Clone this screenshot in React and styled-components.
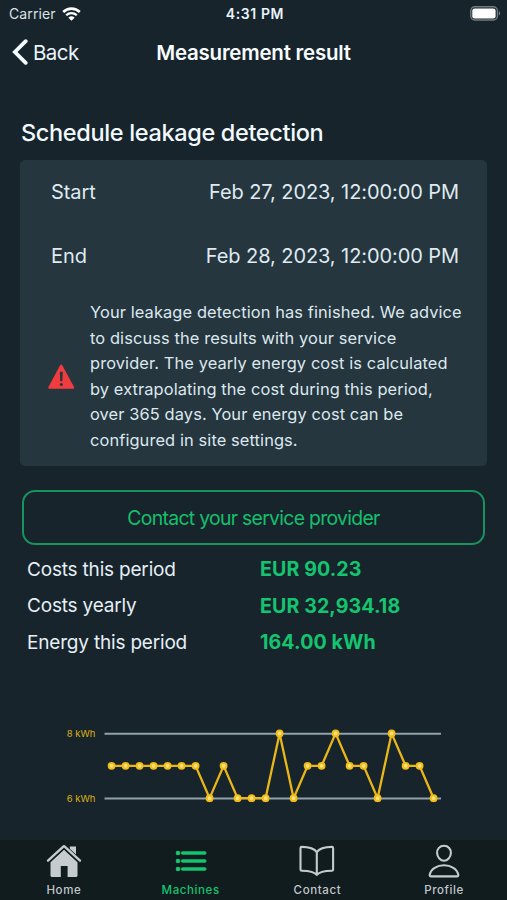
import styled, { createGlobalStyle } from "styled-components";

const GlobalStyle = createGlobalStyle`
  * {
    box-sizing: border-box;
  }
  body {
    margin: 0;
    background-color: #17242c;
    font-family: Inter, "Liberation Sans", sans-serif;
  }
`;

const Screen = styled.div`
  display: flex;
  flex-direction: column;
  width: 507px;
  height: 900px;
  overflow: hidden;
  background-color: #17242c;
  color: #e9f3f9;
`;

const StatusBar = styled.div`
  display: grid;
  grid-template-columns: 1fr auto 1fr;
  align-items: center;
  height: 27px;
  padding: 0 6px 0 9px;
`;

const Carrier = styled.div`
  display: flex;
  align-items: center;
  gap: 6px;
  font-size: 14px;
  letter-spacing: 0.1px;
  color: #dbe1e4;
`;

const Clock = styled.div`
  font-size: 14px;
  font-weight: 600;
  letter-spacing: 0.6px;
`;

const Battery = styled.div`
  display: flex;
  justify-content: flex-end;
`;

const NavBar = styled.header`
  display: grid;
  grid-template-columns: 1fr auto 1fr;
  align-items: center;
  height: 50px;
  padding: 0 12px;
`;

const BackButton = styled.div`
  display: flex;
  align-items: center;
  gap: 5px;
  font-size: 20.5px;
  letter-spacing: -0.55px;
`;

const NavTitle = styled.h1`
  margin: 0;
  font-size: 20.5px;
  font-weight: 600;
  letter-spacing: -0.23px;
  color: #f7fcff;
`;

const Content = styled.main`
  flex: 1;
  padding: 38px 20px 0;
`;

const SectionTitle = styled.h2`
  margin: 0 0 9px 1px;
  font-size: 23.5px;
  font-weight: 450;
  line-height: 36px;
  letter-spacing: -0.35px;
  color: #f2fafe;
`;

const Card = styled.section`
  width: 467px;
  height: 306px;
  border-radius: 5px;
  background-color: #26363f;
`;

const CardRow = styled.div`
  display: flex;
  align-items: center;
  justify-content: space-between;
  height: 64px;
  padding: 0 28px 0 31px;
  font-size: 20px;
  letter-spacing: -0.08px;
  color: #dfeaf1;
`;

const Notice = styled.div`
  display: flex;
  align-items: center;
  gap: 15px;
  padding: 12px 0 0 28px;
`;

const NoticeText = styled.p`
  margin: 0;
  font-size: 16.4px;
  line-height: 25.6px;
  letter-spacing: 0.11px;
  white-space: nowrap;
  color: #dce8ee;
`;

const ContactButton = styled.div`
  display: flex;
  align-items: center;
  justify-content: center;
  width: 463px;
  height: 55px;
  margin: 24px 0 6px 2px;
  border: 2px solid #19935d;
  border-radius: 13px;
  font-size: 19.4px;
  letter-spacing: -0.7px;
  color: #14c06d;
`;

const ResultRow = styled.div`
  display: grid;
  grid-template-columns: 233px 1fr;
  align-items: center;
  height: 36.6px;
  padding-left: 7px;
  font-size: 19px;
`;

const ResultLabel = styled.span`
  letter-spacing: -0.19px;
  color: #e6eff5;
`;

const ResultValue = styled.span`
  font-size: 19.6px;
  font-weight: 650;
  letter-spacing: 0.1px;
  color: #14c46f;
`;

const Chart = styled.svg`
  display: block;
  margin: 59px 0 0 40px;
`;

const TabBar = styled.nav`
  display: grid;
  grid-template-columns: repeat(4, 1fr);
  height: 60px;
  background-color: #111c1f;
`;

const Tab = styled.div`
  display: flex;
  flex-direction: column;
  align-items: center;
  padding: 2px 0 0 1px;
  font-size: 11.5px;
  font-weight: 500;
  letter-spacing: 0.6px;
  color: ${(props) => (props.$active ? "#14c46f" : "#c1c8cb")};
`;

const TabLabel = styled.span`
  line-height: 14px;
  margin-top: 3px;
`;

function WifiIcon() {
  return (
    <svg width="19" height="14" viewBox="0 0 19 14" fill="none">
      <path d="M1.2 5A11.8 11.8 0 0 1 17.8 5" stroke="#fff" strokeWidth="2.6" />
      <path d="M4.2 8.2A7.6 7.6 0 0 1 14.8 8.2" stroke="#fff" strokeWidth="2.3" />
      <path d="M9.5 13.8 6.4 10.8A4.5 4.5 0 0 1 12.6 10.8Z" fill="#fff" />
    </svg>
  );
}

function BatteryIcon() {
  return (
    <svg width="31" height="15" viewBox="0 0 31 15">
      <rect x="0.8" y="0.8" width="26.6" height="13.2" rx="4" fill="none" stroke="#707a80" strokeWidth="1.4" />
      <rect x="2.3" y="2.4" width="23.3" height="10" rx="2.2" fill="#fff" />
      <path d="M28.8 5.2a2.4 2.4 0 0 1 0 4.4z" fill="#707a80" />
    </svg>
  );
}

function BackIcon() {
  return (
    <svg width="16" height="26" viewBox="0 0 16 26" fill="none">
      <path d="M13.7 2.2 2.9 13 13.7 23.8" stroke="#f4fbff" strokeWidth="3.8" strokeLinecap="round" strokeLinejoin="miter" />
    </svg>
  );
}

function WarningIcon() {
  return (
    <svg width="27" height="26" viewBox="0 0 27 26">
      <path d="M13.2 1.8 25 23.6H1.5Z" fill="#f13c3f" stroke="#f13c3f" strokeWidth="2.4" strokeLinejoin="round" />
      <path d="M11.8 7.8h3l-.45 9.4h-2.1z" fill="#26363f" />
      <circle cx="13.3" cy="20.4" r="1.5" fill="#26363f" />
    </svg>
  );
}

function HomeIcon() {
  return (
    <svg width="38" height="38" viewBox="0 0 38 38" fill="#c5cbce">
      <path d="M24.8 4.4h6.2v12.4l-6.2-5.6z" />
      <path d="M19 7.8 32.5 20.3v13.1a1.6 1.6 0 0 1-1.6 1.6h-8.3V24h-6.8v11H7.1a1.6 1.6 0 0 1-1.6-1.6V20.3z" />
      <path d="M3 19.2 19 4.4 35 19.2" fill="none" stroke="#111c1f" strokeWidth="4.4" />
      <path d="M3 18.6 18 4.8q1-.9 2 0l15 13.8" fill="none" stroke="#c5cbce" strokeWidth="2.4" strokeLinecap="round" />
    </svg>
  );
}

function MachinesIcon() {
  return (
    <svg width="38" height="38" viewBox="0 0 38 38">
      {[11, 19, 27].map((y) => (
        <g key={y} stroke="#14c46f" strokeLinecap="round">
          <path d={`M10.6 ${y}H32.8`} strokeWidth="3.4" />
          <circle cx="6" cy={y} r="2.3" fill="#14c46f" stroke="none" />
        </g>
      ))}
    </svg>
  );
}

function ContactIcon() {
  return (
    <svg width="38" height="38" viewBox="0 0 38 38" fill="none" stroke="#c5cbce" strokeWidth="2.1" strokeLinecap="round" strokeLinejoin="round">
      <path d="M18.8 10.2C16.2 6.3 10.6 5 3.7 4.9a1.2 1.2 0 0 0-1.2 1.2v21.4a1.2 1.2 0 0 0 1.2 1.2c7 .1 12.4.5 15.1 4.2 2.7-3.7 8.1-4.1 15.1-4.2a1.2 1.2 0 0 0 1.2-1.2V6.1a1.2 1.2 0 0 0-1.2-1.2C27 5 21.4 6.3 18.8 10.2ZM18.8 10.2v22.4" />
    </svg>
  );
}

function ProfileIcon() {
  return (
    <svg width="38" height="38" viewBox="0 0 38 38" fill="none" stroke="#c5cbce" strokeWidth="2.1" strokeLinejoin="round">
      <path d="M25.9 11.2c-.3 4.2-3.4 7.5-6.9 7.5s-6.6-3.3-6.9-7.5C11.8 6.9 14.8 3.8 19 3.8s7.2 3.2 6.9 7.4Z" />
      <path d="M19 23.2C12.2 23.2 5.7 26.9 4.7 33c-.1.9.4 1.4 1.3 1.4h26c.9 0 1.4-.5 1.3-1.4C32.3 26.9 25.8 23.2 19 23.2Z" />
    </svg>
  );
}

// hourly consumption in kWh
const readings = [
  7, 7, 7, 7, 7, 7, 7, 6, 7, 6, 6, 6, 8, 6, 7, 7, 8, 7, 7, 6, 8, 7, 7, 6,
];

const points = readings.map((value, i) => [51.6 + i * 14, 78.2 - (value - 6) * 32.4]);

function EnergyChart() {
  return (
    <Chart width="400" height="90" viewBox="0 0 400 90">
      <path d="M44.5 13.7H381M44.5 78.5H381" stroke="#91a2a8" strokeWidth="2" />
      <g fill="#dcb014" fontSize="9.5" textAnchor="end">
        <text x="35.5" y="17">8 kWh</text>
        <text x="35.5" y="82">6 kWh</text>
      </g>
      <polyline points={points.join(" ")} fill="none" stroke="#e9b717" strokeWidth="2.3" />
      {points.map(([x, y]) => (
        <circle key={x} cx={x} cy={y} r="2.9" fill="#ffe27a" stroke="#f3bd19" strokeWidth="2" />
      ))}
    </Chart>
  );
}

const tabs = [
  { name: "Home", icon: HomeIcon },
  { name: "Machines", icon: MachinesIcon },
  { name: "Contact", icon: ContactIcon },
  { name: "Profile", icon: ProfileIcon },
];

export default function App() {
  return (
    <>
      <GlobalStyle />
      <Screen>
        <StatusBar>
          <Carrier>
            Carrier
            <WifiIcon />
          </Carrier>
          <Clock>4:31 PM</Clock>
          <Battery>
            <BatteryIcon />
          </Battery>
        </StatusBar>
        <NavBar>
          <BackButton>
            <BackIcon />
            Back
          </BackButton>
          <NavTitle>Measurement result</NavTitle>
        </NavBar>
        <Content>
          <SectionTitle>Schedule leakage detection</SectionTitle>
          <Card>
            <CardRow>
              <span>Start</span>
              <span>Feb 27, 2023, 12:00:00 PM</span>
            </CardRow>
            <CardRow>
              <span>End</span>
              <span>Feb 28, 2023, 12:00:00 PM</span>
            </CardRow>
            <Notice>
              <WarningIcon />
              <NoticeText>
                Your leakage detection has finished. We advice
                <br />
                to discuss the results with your service
                <br />
                provider. The yearly energy cost is calculated
                <br />
                by extrapolating the cost during this period,
                <br />
                over 365 days. Your energy cost can be
                <br />
                configured in site settings.
              </NoticeText>
            </Notice>
          </Card>
          <ContactButton>Contact your service provider</ContactButton>
          <ResultRow>
            <ResultLabel>Costs this period</ResultLabel>
            <ResultValue>EUR 90.23</ResultValue>
          </ResultRow>
          <ResultRow>
            <ResultLabel>Costs yearly</ResultLabel>
            <ResultValue>EUR 32,934.18</ResultValue>
          </ResultRow>
          <ResultRow>
            <ResultLabel>Energy this period</ResultLabel>
            <ResultValue>164.00 kWh</ResultValue>
          </ResultRow>
          <EnergyChart />
        </Content>
        <TabBar>
          {tabs.map(({ name, icon: Icon }) => (
            <Tab key={name} $active={name === "Machines"}>
              <Icon />
              <TabLabel>{name}</TabLabel>
            </Tab>
          ))}
        </TabBar>
      </Screen>
    </>
  );
}
